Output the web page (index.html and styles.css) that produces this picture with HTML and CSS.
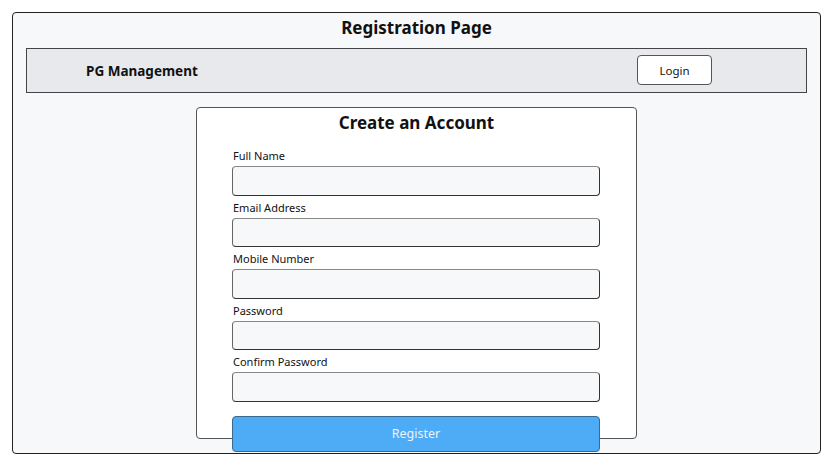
FILE: index.html
```html
<!DOCTYPE html>
<html>
<head>
<meta charset="utf-8">
<link rel="stylesheet" href="styles.css">
</head>
<body>
<div class="frame">
  <h1 class="page-title">Registration Page</h1>
  <nav class="navbar">
    <span class="brand">PG Management</span>
    <button class="login-btn">Login</button>
  </nav>
  <div class="card">
    <h2 class="card-title">Create an Account</h2>
    <form class="form">
      <label class="field"><span class="label">Full Name</span><input class="input" type="text"></label>
      <label class="field"><span class="label">Email Address</span><input class="input" type="text"></label>
      <label class="field"><span class="label">Mobile Number</span><input class="input" type="text"></label>
      <label class="field"><span class="label">Password</span><input class="input" type="password"></label>
      <label class="field"><span class="label">Confirm Password</span><input class="input" type="password"></label>
      <button type="button" class="register-btn">Register</button>
    </form>
  </div>
</div>
</body>
</html>
```

FILE: styles.css
```css
html, body {
  margin: 0;
  padding: 0;
  background: #ffffff;
}
body {
  padding: 12px 15px 0 12px;
  font-family: "Noto Sans", "Open Sans", sans-serif;
  color: #111;
}
.frame {
  box-sizing: border-box;
  width: 809px;
  height: 442px;
  border: 1.5px solid #222;
  border-radius: 4px;
  background: #f7f8fa;
  padding: 0 13px;
  display: flex;
  flex-direction: column;
  align-items: stretch;
}
.page-title {
  margin: 0;
  height: 35px;
  line-height: 30px;
  text-align: center;
  font-size: 17px;
  font-weight: 700;
}
.navbar {
  box-sizing: border-box;
  height: 45px;
  border: 1px solid #444;
  background: #e7e9ec;
  display: flex;
  align-items: center;
  padding: 0 94px 0 59px;
  justify-content: space-between;
}
.brand {
  font-size: 13.5px;
  font-weight: 700;
}
.login-btn {
  box-sizing: border-box;
  width: 75px;
  height: 30px;
  background: #fff;
  border: 1px solid #555;
  border-radius: 4px;
  font-family: inherit;
  font-size: 11.5px;
  color: #111;
  margin-top: -1px;
}
.card {
  box-sizing: border-box;
  align-self: center;
  width: 441px;
  height: 332px;
  margin-top: 14px;
  border: 1px solid #555;
  border-radius: 4px;
  background: #fff;
  padding: 3px 35px 0 35px;
}
.card-title {
  margin: 0 0 13px;
  text-align: center;
  font-size: 17px;
  font-weight: 700;
  line-height: 24px;
}
.form {
  display: flex;
  flex-direction: column;
}
.field {
  display: flex;
  flex-direction: column;
  margin-bottom: 4px;
}
.label {
  font-size: 11px;
  line-height: 16px;
  margin-left: 1px;
  height: 18px;
}
.input {
  box-sizing: border-box;
  height: 29.5px;
  width: 368px;
  border: 1px solid #333;
  border-top-color: #888;
  border-left-color: #666;
  border-radius: 4px;
  background: #f7f8fa;
  margin: 0;
}
.register-btn {
  box-sizing: border-box;
  width: 368px;
  height: 36px;
  margin-top: 10px;
  border: 1px solid #3a6a90;
  border-radius: 4px;
  background: #4eabf5;
  color: #eaf4fd;
  font-family: inherit;
  font-size: 12.5px;
}
```
